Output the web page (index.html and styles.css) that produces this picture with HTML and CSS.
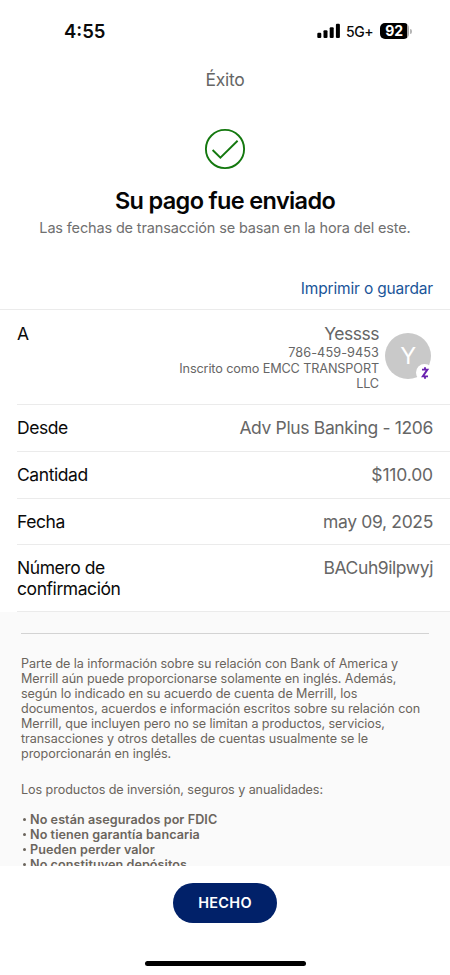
FILE: index.html
```html
<!DOCTYPE html>
<html lang="es">
<head>
<meta charset="utf-8">
<meta name="viewport" content="width=device-width, initial-scale=1">
<title>Éxito</title>
<link rel="stylesheet" href="styles.css">
</head>
<body>
<div class="screen">
  <header class="status">
    <span class="time">4:55</span>
    <div class="indicators">
      <svg class="signal" width="24" height="16" viewBox="0 0 24 16" aria-hidden="true">
        <rect x="0.3" y="9.8" width="4" height="5.2" rx="1.1"/>
        <rect x="6.5" y="7.2" width="4" height="7.8" rx="1.1"/>
        <rect x="12.7" y="4.2" width="4" height="10.8" rx="1.1"/>
        <rect x="18.9" y="0.8" width="4" height="14.2" rx="1.1"/>
      </svg>
      <span class="network">5G+</span>
      <div class="battery"><span class="level">92</span><span class="cap"></span></div>
    </div>
  </header>
  <h1 class="nav-title">Éxito</h1>
  <main class="content">
    <section class="hero">
      <svg class="check" width="42" height="42" viewBox="0 0 42 42" fill="none" aria-hidden="true">
        <circle cx="21" cy="21" r="19.1"/>
        <path d="M8.6 22 L16.4 29.6 L33.6 12.7"/>
      </svg>
      <h2 class="title">Su pago fue enviado</h2>
      <p class="subtitle">Las fechas de transacción se basan en la hora del este.</p>
    </section>
    <a class="print">Imprimir o guardar</a>
    <dl class="details">
      <div class="row payee">
        <dt>A</dt>
        <dd>
          <div class="contact">
            <div class="name">Yessss</div>
            <div class="phone">786-459-9453</div>
            <div class="enrolled">Inscrito como EMCC TRANSPORT<br>LLC</div>
          </div>
          <div class="avatar">Y
            <span class="badge">
              <svg width="10" height="14" viewBox="0 0 10 14" fill="none" aria-hidden="true">
                <path d="M2 3.6 H7.4 L2.8 10.4 H8 M5 1.2 V3.6 M5 10.4 V12.8"/>
              </svg>
            </span>
          </div>
        </dd>
      </div>
      <div class="row from"><dt>Desde</dt><dd class="account">Adv Plus Banking - 1206</dd></div>
      <div class="row amount"><dt>Cantidad</dt><dd class="sum">$110.00</dd></div>
      <div class="row date"><dt>Fecha</dt><dd class="day">may 09, 2025</dd></div>
      <div class="row confirmation"><dt>Número de<br>confirmación</dt><dd class="code">BACuh9ilpwyj</dd></div>
    </dl>
    <section class="legal">
      <hr>
      <p>Parte de la información sobre su relación con Bank of America y<br>Merrill aún puede proporcionarse solamente en inglés. Además,<br>según lo indicado en su acuerdo de cuenta de Merrill, los<br>documentos, acuerdos e información escritos sobre su relación con<br>Merrill, que incluyen pero no se limitan a productos, servicios,<br>transacciones y otros detalles de cuentas usualmente se le<br>proporcionarán en inglés.</p>
      <p>Los productos de inversión, seguros y anualidades:</p>
      <ul>
        <li>No están asegurados por FDIC</li>
        <li>No tienen garantía bancaria</li>
        <li>Pueden perder valor</li>
        <li>No constituyen depósitos</li>
      </ul>
    </section>
  </main>
  <footer class="footer">
    <button class="done">HECHO</button>
    <div class="home"></div>
  </footer>
</div>
</body>
</html>
```
FILE: styles.css
```css
* { box-sizing: border-box; margin: 0; padding: 0; }
body { background: #fff; color: #0a0a0a; font-family: Inter, "Liberation Sans", sans-serif; }
.screen { width: 450px; height: 975px; display: flex; flex-direction: column; overflow: hidden; }

.status { height: 62px; flex: none; display: flex; justify-content: space-between; align-items: center; padding: 0 38px 0 64px; }
.time { font-size: 18.5px; font-weight: 600; letter-spacing: 0; }
.indicators { display: flex; align-items: center; }
.signal { fill: #000; }
.network { font-size: 14px; font-weight: 500; margin: 1px 0 0 5px; width: 34px; letter-spacing: -0.4px; white-space: nowrap; }
.battery { display: flex; align-items: center; gap: 1px; }
.level { width: 29px; height: 16px; border-radius: 5px; background: linear-gradient(to right, #000 27px, #aaa 27px); color: #fff; font-size: 14px; line-height: 16px; font-weight: 700; text-align: center; padding-right: 1px; letter-spacing: -0.2px; }
.cap { width: 2px; height: 5px; border-radius: 0 2px 2px 0; background: #b5b5b5; }

.nav-title { flex: none; height: 36px; line-height: 36px; text-align: center; font-size: 17.5px; font-weight: 400; color: #666; letter-spacing: -0.3px; }

.content { flex: 1; min-height: 0; overflow: hidden; display: flex; flex-direction: column; padding-top: 30px; }
.hero { display: flex; flex-direction: column; align-items: center; flex: none; }
.check { stroke: #14780f; stroke-width: 1.9; }
.title { margin-top: 16px; font-size: 23.5px; line-height: 30px; font-weight: 600; letter-spacing: -0.65px; white-space: nowrap; color: #050505; }
.subtitle { margin-top: 2px; font-size: 14.5px; line-height: 20px; color: #707070; white-space: nowrap; letter-spacing: -0.15px; }
.print { flex: none; margin: 41px 17px 0 0; text-align: right; font-size: 15.5px; line-height: 20px; color: #1a5599; letter-spacing: -0.17px; }

.details { flex: none; margin-top: 10px; border-top: 1px solid #ebebeb; font-size: 17.5px; line-height: 21px; }
.row { display: flex; justify-content: space-between; align-items: flex-start; margin-left: 17px; padding: 12px 17px 0 0; border-bottom: 1px solid #ebebeb; letter-spacing: -0.35px; }
.row dt { letter-spacing: -0.43px; }
.row dd { color: #666; text-align: right; white-space: nowrap; }
.row .sum { letter-spacing: -0.15px; }
.row .day { letter-spacing: -0.35px; }
.row .code { letter-spacing: -0.42px; }
.payee { height: 95px; padding-top: 13px; }
.payee dd { display: flex; }
.from { height: 47px; }
.amount { height: 47px; }
.date { height: 46px; }
.confirmation { height: 67px; }
.contact { margin-right: 6px; }
.name { letter-spacing: -0.5px; }
.phone { font-size: 12.7px; line-height: 17px; letter-spacing: 0.08px; }
.enrolled { font-size: 12.7px; line-height: 15px; letter-spacing: -0.13px; }
.avatar { position: relative; width: 46px; height: 46px; margin: 10px 2px 0 0; border-radius: 50%; background: #c9c9c9; color: #fff; font-size: 23.5px; line-height: 46px; text-align: center; }
.badge { position: absolute; right: -2px; bottom: -2px; width: 17px; height: 17px; border-radius: 50%; background: #fff; display: flex; align-items: center; justify-content: center; }
.badge svg { stroke: #6a22b0; stroke-width: 1.9; }

.legal { flex: none; padding: 21px 21px 20px; background: #fafafa; color: #6b655d; font-size: 12.6px; line-height: 15px; white-space: nowrap; letter-spacing: -0.075px; }
.legal hr { border: 0; height: 1px; background: #d3d3d3; margin-bottom: 22px; }
.legal p { margin-bottom: 21px; }
.legal ul { list-style: none; font-weight: 600; margin-top: -6px; letter-spacing: 0.07px; }
.legal li { display: flex; align-items: center; gap: 4.5px; margin-left: 1.5px; }
.legal li::before { content: ""; width: 3px; height: 3px; border-radius: 50%; background: #6b655d; }

.footer { flex: none; height: 109px; background: #fff; display: flex; flex-direction: column; align-items: center; padding-top: 16.5px; }
.done { width: 104px; height: 40px; border: 0; border-radius: 20px; background: #012169; color: #fff; font: 600 14.5px/40px Inter, sans-serif; letter-spacing: 0.3px; }
.home { width: 161px; height: 5px; border-radius: 3px; background: #000; margin-top: 38.5px; }
```
